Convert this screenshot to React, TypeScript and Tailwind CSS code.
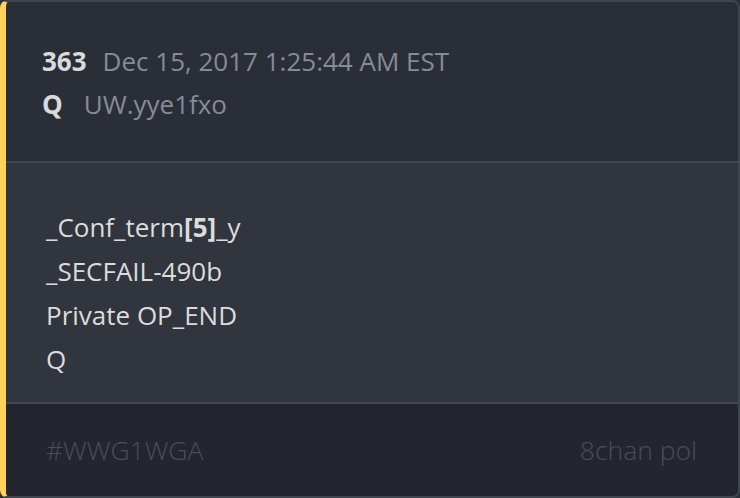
export default function App() {
  return (
    <div className="w-[740px] h-[498px] bg-[#2b2f37] font-['Open_Sans',sans-serif]">
      <div className="h-full flex flex-col overflow-hidden rounded-lg border-2 border-l-[6px] border-[#40444d] border-l-[#fdd35b] bg-[#2a2e37]">
        <div className="pt-[38px] pb-[35px] pl-[36px] text-[26px] leading-[43px]">
          <div className="flex items-baseline">
            <span className="font-bold text-[#d9dadc]">363</span>
            <span className="ml-[16px] text-[#868b98]">Dec 15, 2017 1:25:44 AM EST</span>
          </div>
          <div className="flex items-baseline">
            <span className="font-bold text-[#d9dadc]">Q</span>
            <span className="ml-[21px] text-[#868b98]">UW.yye1fxo</span>
          </div>
        </div>
        <div className="border-t-2 border-[#434750] bg-[#30353e] pt-[42px] pb-[21px] pl-[40px] text-[26px] leading-[44px] text-[#dcdcdc]">
          <p>_Conf_term<span className="font-bold">[5]</span>_y</p>
          <p>_SECFAIL-490b</p>
          <p>Private OP_END</p>
          <p>Q</p>
        </div>
        <div className="flex-1 border-t-2 border-[#434750] bg-[#23262e] flex items-center justify-between pl-[40px] pr-[41px] pt-[2px] text-[26.5px] text-[#4a4e58] font-light">
          <span>#WWG1WGA</span>
          <span>8chan pol</span>
        </div>
      </div>
    </div>
  );
}
